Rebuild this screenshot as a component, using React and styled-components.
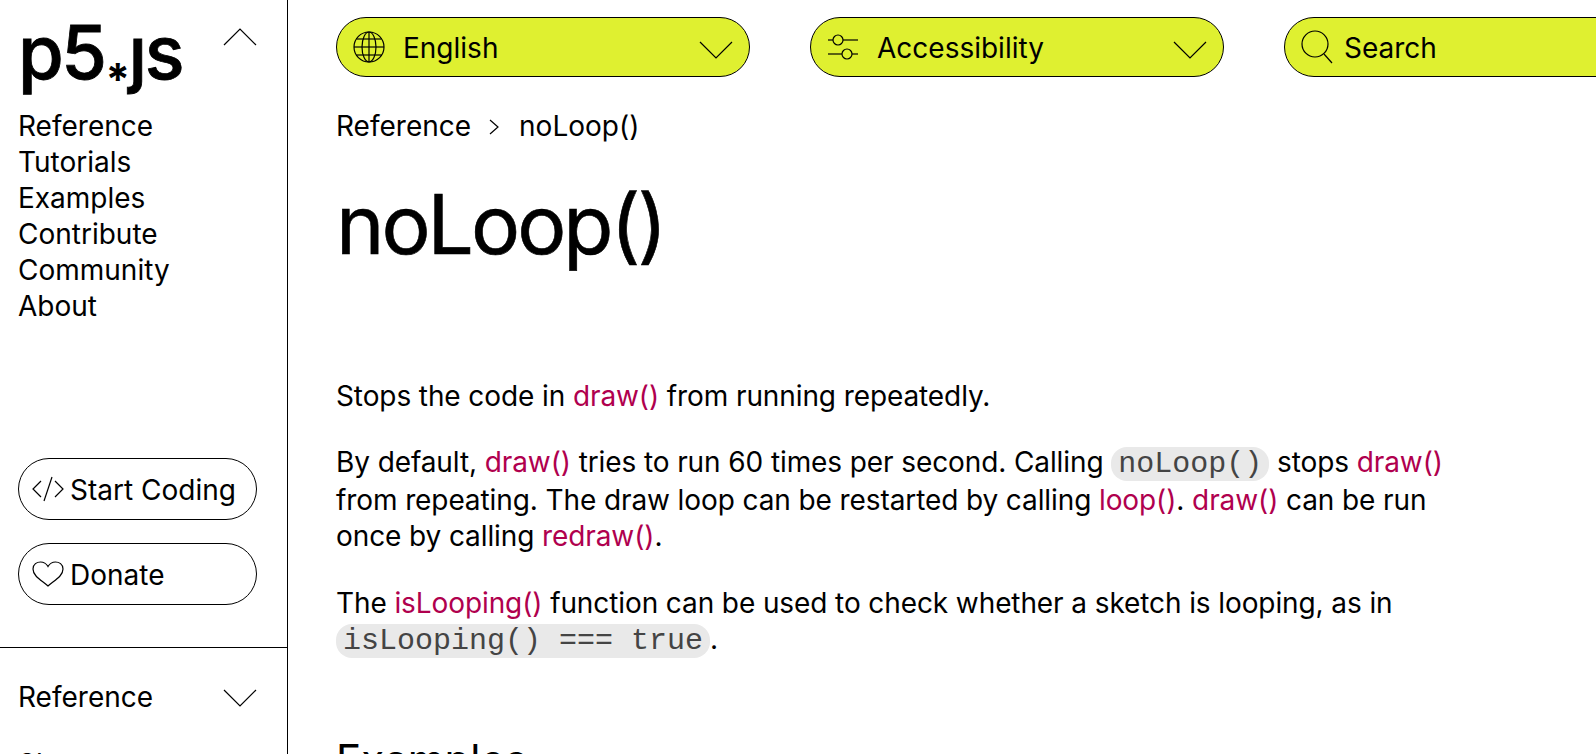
import React from 'react';
import styled, { createGlobalStyle } from 'styled-components';

const navLinks = ['Reference', 'Tutorials', 'Examples', 'Contribute', 'Community', 'About'];

export default function App() {
  return (
    <Page>
      <GlobalStyle />

      <Sidebar>
        <SidebarTop>
          <LogoRow>
            <Logo>p5<LogoStar>*</LogoStar>ȷs</Logo>
            <Chevron $top={12} width="34" height="20" viewBox="0 0 34 20"><polyline points="1,17 17,1 33,17" /></Chevron>
          </LogoRow>
          <NavList>
            {navLinks.map((link) => <NavLink key={link}>{link}</NavLink>)}
          </NavList>
          <SideButtons>
            <SideButton>
              <IconSvg width="34" height="28" viewBox="0 0 34 28">
                <polyline points="10,6 2,14 10,22" />
                <line x1="21" y1="2" x2="13" y2="26" />
                <polyline points="24,6 32,14 24,22" />
              </IconSvg>
              <SideLabel>Start Coding</SideLabel>
            </SideButton>
            <SideButton>
              <IconSvg width="34" height="28" viewBox="0 0 34 28">
                <path d="M17 26 C10 20 2 16 2 9 C2 4 6 2 9.500 2 C13 2 15.500 4 17 6.500 C18.500 4 21 2 24.500 2 C28 2 32 4 32 9 C32 16 24 20 17 26 Z" />
              </IconSvg>
              <SideLabel>Donate</SideLabel>
            </SideButton>
          </SideButtons>
        </SidebarTop>

        <FilterRow>
          Reference
          <Chevron $top={0} width="34" height="20" viewBox="0 0 34 20"><polyline points="1,3 17,19 33,3" /></Chevron>
        </FilterRow>
        <FilterItem>Shape</FilterItem>
      </Sidebar>

      <Main>
        <Toolbar>
          <SelectPill>
            <IconSvg width="32" height="36" viewBox="0 0 32 36">
              <circle cx="16" cy="18" r="15" />
              <ellipse cx="16" cy="18" rx="7" ry="15" />
              <line x1="16" y1="3" x2="16" y2="33" />
              <line x1="1" y1="18" x2="31" y2="18" />
              <line x1="3.500" y1="10" x2="28.500" y2="10" />
              <line x1="3.500" y1="26" x2="28.500" y2="26" />
            </IconSvg>
            <PillLabel>English</PillLabel>
            <PillChevron width="34" height="20" viewBox="0 0 34 20"><polyline points="1,2 17,18 33,2" /></PillChevron>
          </SelectPill>
          <SelectPill>
            <IconSvg width="32" height="28" viewBox="0 0 32 28">
              <line x1="1" y1="7" x2="6" y2="7" />
              <circle cx="11" cy="7" r="5" />
              <line x1="16" y1="7" x2="31" y2="7" />
              <line x1="1" y1="21" x2="15" y2="21" />
              <circle cx="20" cy="21" r="5" />
              <line x1="25" y1="21" x2="31" y2="21" />
            </IconSvg>
            <PillLabel>Accessibility</PillLabel>
            <PillChevron width="34" height="20" viewBox="0 0 34 20"><polyline points="1,2 17,18 33,2" /></PillChevron>
          </SelectPill>
          <SearchPill>
            <IconSvg width="32" height="34" viewBox="0 0 32 34">
              <circle cx="14" cy="14" r="13" />
              <line x1="23" y1="24" x2="31" y2="33" />
            </IconSvg>
            <SearchLabel>Search</SearchLabel>
          </SearchPill>
        </Toolbar>

        <Breadcrumb>
          Reference
          <BreadcrumbArrow width="12" height="18" viewBox="0 0 12 18"><polyline points="2,2 10,9 2,16" /></BreadcrumbArrow>
          noLoop()
        </Breadcrumb>

        <Title>noLoop()</Title>

        <Description>
          <Para>Stops the code in <Ref>draw()</Ref> from running repeatedly.</Para>
          <Para>
            By default, <Ref>draw()</Ref> tries to run 60 times per second. Calling <Code>noLoop()</Code> stops <Ref>draw()</Ref> from repeating. The draw loop can be restarted by calling <Ref>loop()</Ref>. <Ref>draw()</Ref> can be run once by calling <Ref>redraw()</Ref>.
          </Para>
          <Para>
            The <Ref>isLooping()</Ref> function can be used to check whether a sketch is looping, as in <Code>isLooping() === true</Code>.
          </Para>
        </Description>

        <SectionTitle>Examples</SectionTitle>
      </Main>
    </Page>
  );
}

const GlobalStyle = createGlobalStyle`
  html, body {
    margin: 0;
    height: 754px;
    overflow: hidden;
    background: #fff;
  }
  body {
    font-family: Inter, "Liberation Sans", sans-serif;
    color: #000;
  }
`;

const Page = styled.div`
  display: flex;
  width: 1596px;
  height: 754px;
  overflow: hidden;
`;

const Sidebar = styled.aside`
  flex: 0 0 288px;
  height: 754px;
  border-right: 1px solid #000;
  box-sizing: border-box;
  overflow: hidden;
`;

const SidebarTop = styled.div`
  height: 648px;
  box-sizing: border-box;
  padding: 16px 30px 0 18px;
  border-bottom: 1px solid #000;
`;

const LogoRow = styled.div`
  display: flex;
  justify-content: space-between;
  align-items: flex-start;
  height: 92px;
`;

const Logo = styled.div`
  font-size: 74px;
  line-height: 72px;
  font-weight: 500;
  letter-spacing: -2.500px;
  -webkit-text-stroke: 0.800px #000;
`;

const LogoStar = styled.span`
  font-size: 44px;
  line-height: 0;
  font-weight: 700;
  margin: 0 1px;
  position: relative;
  top: 16px;
  -webkit-text-stroke: 0;
`;

const Chevron = styled.svg`
  fill: none;
  stroke: #000;
  stroke-width: 1.200;
  margin-top: ${(props) => props.$top}px;
`;

const NavList = styled.nav`
  display: flex;
  flex-direction: column;
`;

const NavLink = styled.a`
  font-size: 28px;
  line-height: 36px;
`;

const SideButtons = styled.div`
  display: flex;
  flex-direction: column;
  gap: 23px;
  margin-top: 134px;
`;

const SideButton = styled.a`
  display: flex;
  align-items: center;
  gap: 5px;
  width: 239px;
  height: 62px;
  box-sizing: border-box;
  padding: 0 12px;
  border: 1px solid #000;
  border-radius: 31px;
  font-size: 28px;
`;

const SideLabel = styled.span`
  padding-top: 2px;
`;

const IconSvg = styled.svg`
  flex: none;
  fill: none;
  stroke: #000;
  stroke-width: 1.200;
`;

const FilterRow = styled.div`
  display: flex;
  justify-content: space-between;
  align-items: center;
  padding: 31px 30px 0 18px;
  font-size: 28px;
  line-height: 36px;
`;

const FilterItem = styled.div`
  padding: 31px 18px 0;
  font-size: 28px;
  line-height: 36px;
`;

const Main = styled.main`
  flex: 1;
  min-width: 0;
  padding: 17px 0 0 48px;
`;

const Toolbar = styled.div`
  display: flex;
  gap: 60px;
  width: 1400px;
`;

const SelectPill = styled.div`
  display: flex;
  align-items: center;
  flex: 0 0 414px;
  height: 60px;
  box-sizing: border-box;
  padding: 0 16px;
  border: 1px solid #000;
  border-radius: 30px;
  background: #dff030;
`;

const SearchPill = styled(SelectPill)`
  flex: 0 0 500px;
`;

const PillLabel = styled.span`
  flex: 1;
  margin-left: 18px;
  padding-top: 2px;
  font-size: 28px;
`;

const SearchLabel = styled.span`
  margin-left: 11px;
  padding-top: 2px;
  font-size: 28px;
`;

const PillChevron = styled.svg`
  fill: none;
  stroke: #000;
  stroke-width: 1.200;
  margin-top: 6px;
`;

const Breadcrumb = styled.div`
  display: flex;
  align-items: center;
  margin-top: 31px;
  font-size: 28px;
  line-height: 36px;
`;

const BreadcrumbArrow = styled.svg`
  fill: none;
  stroke: #000;
  stroke-width: 1.200;
  margin: 2px 19px 0 17px;
`;

const Title = styled.h1`
  margin: 25px 0 0;
  font-size: 82px;
  line-height: 112px;
  font-weight: 400;
  letter-spacing: -3px;
  -webkit-text-stroke: 0.600px #000;
`;

const Description = styled.div`
  width: 1120px;
  margin-top: 97px;
`;

const Para = styled.p`
  margin: 0 0 30px;
  font-size: 28px;
  line-height: 36px;
  letter-spacing: -0.100px;

  &:nth-child(3) {
    margin-top: 31px;
  }
`;

const Ref = styled.a`
  color: #b0004e;
`;

const Code = styled.code`
  padding: 0 7px;
  border-radius: 16px;
  background: #e9e9e9;
  font-family: "Liberation Mono", monospace;
  font-size: 30px;
  letter-spacing: 0;
  color: #444;
`;

const SectionTitle = styled.h2`
  margin: 71px 0 0;
  font-size: 42px;
  line-height: 60px;
  font-weight: 400;
`;
